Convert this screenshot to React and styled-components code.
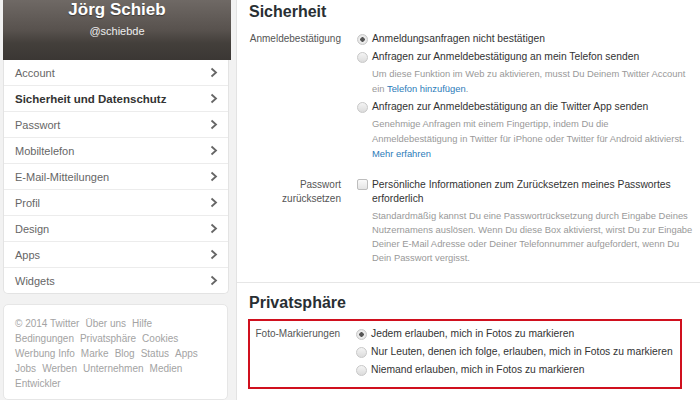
import styled, { createGlobalStyle } from 'styled-components'

const GlobalStyle = createGlobalStyle`
	html, body {
		margin: 0;
		padding: 0;
		background: #f2f2f2;
		font-family: 'Liberation Sans', Arial, sans-serif;
	}
`

const menuItems = [
	{ label: 'Account' },
	{ label: 'Sicherheit und Datenschutz', active: true },
	{ label: 'Passwort' },
	{ label: 'Mobiltelefon' },
	{ label: 'E-Mail-Mitteilungen' },
	{ label: 'Profil' },
	{ label: 'Design' },
	{ label: 'Apps' },
	{ label: 'Widgets' },
]

const footerLines = [
	['© 2014 Twitter', 'Über uns', 'Hilfe'],
	['Bedingungen', 'Privatsphäre', 'Cookies'],
	['Werbung Info', 'Marke', 'Blog', 'Status', 'Apps'],
	['Jobs', 'Werben', 'Unternehmen', 'Medien'],
	['Entwickler'],
]

const photoOptions = [
	{ text: 'Jedem erlauben, mich in Fotos zu markieren', checked: true },
	{ text: 'Nur Leuten, denen ich folge, erlauben, mich in Fotos zu markieren' },
	{ text: 'Niemand erlauben, mich in Fotos zu markieren' },
]

function Chevron() {
	return (
		<svg width="8" height="11" viewBox="0 0 8 11">
			<polyline
				points="1.5,1.5 6,5.5 1.5,9.5"
				fill="none"
				stroke="#666"
				strokeWidth="1.8"
			/>
		</svg>
	)
}

function Radio({ checked }) {
	return <S.RadioDot $checked={checked} />
}

function App() {
	return (
		<>
			<GlobalStyle />
			<S.Page>
				<S.Sidebar>
					<S.ProfileHeader>
						<S.Name>Jörg Schieb</S.Name>
						<S.Handle>@schiebde</S.Handle>
					</S.ProfileHeader>
					<S.Menu>
						{menuItems.map(item => (
							<S.MenuItem key={item.label} $active={item.active}>
								<span>{item.label}</span>
								<Chevron />
							</S.MenuItem>
						))}
					</S.Menu>
					<S.FooterCard>
						{footerLines.map((line, i) => (
							<S.FooterLine key={i}>
								{line.map(link => (
									<span key={link}>{link}</span>
								))}
							</S.FooterLine>
						))}
					</S.FooterCard>
				</S.Sidebar>

				<S.Main>
					<S.Section $divider>
						<S.Heading>Sicherheit</S.Heading>
						<S.Row>
							<S.Label>Anmeldebestätigung</S.Label>
							<S.Controls>
								<S.Option>
									<Radio checked />
									Anmeldungsanfragen nicht bestätigen
								</S.Option>
								<S.Option>
									<Radio />
									Anfragen zur Anmeldebestätigung an mein Telefon senden
								</S.Option>
								<S.Help>
									Um diese Funktion im Web zu aktivieren, musst Du Deinem Twitter Account
									<br />
									ein <S.Link>Telefon hinzufügen</S.Link>.
								</S.Help>
								<S.Option $spaced>
									<Radio />
									Anfragen zur Anmeldebestätigung an die Twitter App senden
								</S.Option>
								<S.Help>
									Genehmige Anfragen mit einem Fingertipp, indem Du die
									<br />
									Anmeldebestätigung in Twitter für iPhone oder Twitter für Android aktivierst.
									<br />
									<S.Link>Mehr erfahren</S.Link>
								</S.Help>
							</S.Controls>
						</S.Row>
						<S.Row $gap={17}>
							<S.Label $compact>
								Passwort
								<br />
								zurücksetzen
							</S.Label>
							<S.Controls>
								<S.Option $compact>
									<S.CheckBox />
									<span>
										Persönliche Informationen zum Zurücksetzen meines Passwortes
										<br />
										erforderlich
									</span>
								</S.Option>
								<S.Help $tight>
									Standardmäßig kannst Du eine Passwortrücksetzung durch Eingabe Deines
									<br />
									Nutzernamens auslösen. Wenn Du diese Box aktivierst, wirst Du zur Eingabe
									<br />
									Deiner E-Mail Adresse oder Deiner Telefonnummer aufgefordert, wenn Du
									<br />
									Dein Passwort vergisst.
								</S.Help>
							</S.Controls>
						</S.Row>
					</S.Section>

					<S.Section $top={8}>
						<S.Heading $small>Privatsphäre</S.Heading>
						<S.Highlight>
							<S.Label>Foto-Markierungen</S.Label>
							<S.Controls>
								{photoOptions.map(opt => (
									<S.Option key={opt.text}>
										<Radio checked={opt.checked} />
										{opt.text}
									</S.Option>
								))}
							</S.Controls>
						</S.Highlight>
					</S.Section>
				</S.Main>
			</S.Page>
		</>
	)
}
export default App

const Page = styled.div`
	display: flex;
	gap: 7px;
	width: 700px;
	height: 400px;
	padding-left: 3px;
	box-sizing: border-box;
	overflow: hidden;
`

const Sidebar = styled.div`
	width: 226px;
	flex-shrink: 0;
	display: flex;
	flex-direction: column;
`

const ProfileHeader = styled.div`
	height: 60px;
	margin-right: -2px;
	background: linear-gradient(#6f6965 0%, #58524e 50%, #433f3b 72%, #3b3734 100%);
	color: #fff;
	text-align: center;
	box-sizing: border-box;
`

const Name = styled.div`
	font-size: 17px;
	font-weight: bold;
	line-height: 20px;
	text-shadow: 0 1px 1px rgba(0, 0, 0, 0.4);
`

const Handle = styled.div`
	font-size: 11px;
	line-height: 22px;
	color: #eee;
`

const Menu = styled.ul`
	margin: 0;
	padding: 0;
	list-style: none;
	background: #fff;
	border: 1px solid #e3e3e3;
	border-top: none;
	border-radius: 0 0 5px 5px;
`

const MenuItem = styled.li`
	height: 26px;
	display: flex;
	align-items: center;
	justify-content: space-between;
	padding: 0 10px 0 11px;
	border-bottom: 1px solid #ececec;
	box-sizing: border-box;
	font-size: ${p => (p.$active ? '11.5px' : '11px')};
	font-weight: ${p => (p.$active ? 'bold' : 'normal')};
	color: ${p => (p.$active ? '#333' : '#666')};
	&:last-child {
		border-bottom: none;
		height: 25px;
	}
`

const FooterCard = styled.div`
	margin-top: 10px;
	padding: 11px 11px 8px;
	background: #fff;
	border: 1px solid #e6e6e6;
	border-radius: 5px;
	width: 225px;
	box-sizing: border-box;
`

const FooterLine = styled.div`
	display: flex;
	gap: 6px;
	font-size: 10px;
	line-height: 15px;
	color: #a3a3a3;
	white-space: nowrap;
`

const Main = styled.div`
	flex: 1;
	min-width: 0;
	background: #fff;
	border-left: 1px solid #e3e3e3;
	display: flex;
	flex-direction: column;
`

const Section = styled.div`
	padding: ${p => p.$top || 0}px 18px 17px 11px;
	border-bottom: ${p => (p.$divider ? '1px solid #e6e6e6' : 'none')};
`

const Heading = styled.h2`
	margin: 0 0 ${p => (p.$small ? 4 : 6)}px 1px;
	font-size: 16px;
	line-height: 24px;
	font-weight: bold;
	color: #292f33;
`

const Row = styled.div`
	display: grid;
	grid-template-columns: 93px minmax(0, 1fr);
	column-gap: 16px;
	margin-top: ${p => p.$gap || 0}px;
`

const Label = styled.div`
	text-align: right;
	font-size: 10px;
	line-height: ${p => (p.$compact ? '14px' : '18px')};
	color: #555;
`

const Controls = styled.div`
	display: flex;
	flex-direction: column;
`

const Option = styled.div`
	display: flex;
	align-items: ${p => (p.$compact ? 'flex-start' : 'center')};
	gap: 4px;
	font-size: 10.3px;
	line-height: ${p => (p.$compact ? '14px' : '18px')};
	color: #333;
	margin-top: ${p => (p.$spaced ? 2 : 0)}px;
	white-space: nowrap;
`

const RadioDot = styled.span`
	width: 11px;
	height: 11px;
	flex-shrink: 0;
	border-radius: 50%;
	box-sizing: border-box;
	border: 1px solid #c8c8c8;
	background: ${p =>
		p.$checked
			? 'radial-gradient(circle, #555 0, #555 2px, #eee 2.5px, #ddd 100%)'
			: 'linear-gradient(#f4f4f4, #dcdcdc)'};
`

const CheckBox = styled.span`
	width: 11px;
	height: 11px;
	margin-top: 1px;
	flex-shrink: 0;
	box-sizing: border-box;
	border: 1px solid #bdbdbd;
	border-radius: 2px;
	background: linear-gradient(#fafafa, #e4e4e4);
`

const Help = styled.div`
	padding-left: 15px;
	font-size: 9.4px;
	line-height: ${p => (p.$tight ? '14px' : '15px')};
	margin-top: ${p => (p.$tight ? 3 : 0)}px;
	color: #999;
	white-space: nowrap;
`

const Link = styled.span`
	color: #2b7bb9;
`

const Highlight = styled.div`
	display: grid;
	grid-template-columns: 90px minmax(0, 1fr);
	column-gap: 16px;
	padding: 4px 0 8px;
	border: 2px solid #d0101e;
`

const S = {
	Page,
	Sidebar,
	ProfileHeader,
	Name,
	Handle,
	Menu,
	MenuItem,
	FooterCard,
	FooterLine,
	Main,
	Section,
	Heading,
	Row,
	Label,
	Controls,
	Option,
	RadioDot,
	CheckBox,
	Help,
	Link,
	Highlight,
}
